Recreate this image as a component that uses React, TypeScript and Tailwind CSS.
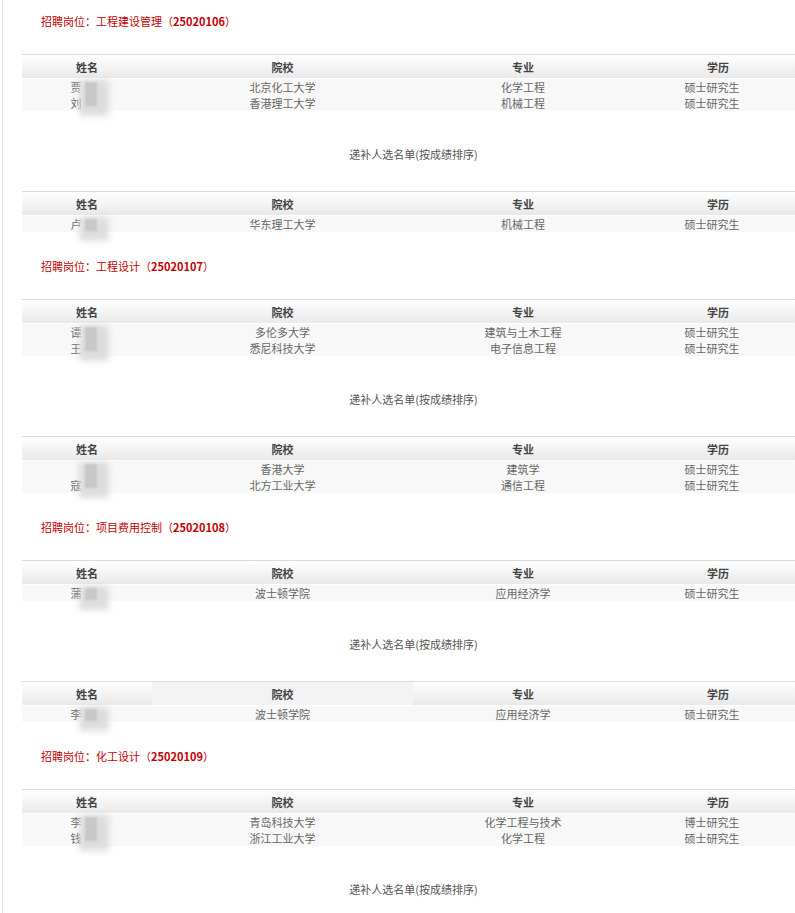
import { FC } from 'react';

type Row = { name: string; school: string; major: string; degree: string };

type Section = {
  post: string;
  code: string;
  main: Row[];
  backup: Row[];
  highlight?: boolean;
};

const sections: Section[] = [
  {
    post: '工程建设管理',
    code: '25020106',
    main: [
      { name: '贾', school: '北京化工大学', major: '化学工程', degree: '硕士研究生' },
      { name: '刘', school: '香港理工大学', major: '机械工程', degree: '硕士研究生' },
    ],
    backup: [{ name: '卢', school: '华东理工大学', major: '机械工程', degree: '硕士研究生' }],
  },
  {
    post: '工程设计',
    code: '25020107',
    main: [
      { name: '谭', school: '多伦多大学', major: '建筑与土木工程', degree: '硕士研究生' },
      { name: '王', school: '悉尼科技大学', major: '电子信息工程', degree: '硕士研究生' },
    ],
    backup: [
      { name: '', school: '香港大学', major: '建筑学', degree: '硕士研究生' },
      { name: '寇', school: '北方工业大学', major: '通信工程', degree: '硕士研究生' },
    ],
  },
  {
    post: '项目费用控制',
    code: '25020108',
    main: [{ name: '蒲', school: '波士顿学院', major: '应用经济学', degree: '硕士研究生' }],
    backup: [{ name: '李', school: '波士顿学院', major: '应用经济学', degree: '硕士研究生' }],
    highlight: true,
  },
  {
    post: '化工设计',
    code: '25020109',
    main: [
      { name: '李', school: '青岛科技大学', major: '化学工程与技术', degree: '博士研究生' },
      { name: '钱', school: '浙江工业大学', major: '化学工程', degree: '硕士研究生' },
    ],
    backup: [],
  },
];

const cols = ['w-[130px]', 'w-[261px]', 'w-[220px]', 'w-[170px]'];

const Table: FC<{ rows: Row[]; highlight?: boolean }> = ({ rows, highlight }) => {
  const heads = ['姓名', '院校', '专业', '学历'];
  return (
    <div className="ml-[19px] w-[791px] shrink-0">
      <div className="flex border-t border-[#dadada]">
        {heads.map((h, i) => (
          <div
            key={h}
            className={`${cols[i]} h-[24px] border-b border-white pt-[1px] text-center leading-[23px] font-bold text-[#444] ${
              highlight && i === 1 ? 'bg-[#f3f3f3]' : 'bg-gradient-to-b from-white to-[#e9e9e9]'
            }`}
          >
            {h}
          </div>
        ))}
        <div className="h-[24px] flex-1 border-b border-white bg-gradient-to-b from-white to-[#e9e9e9]" />
      </div>
      <div className="relative bg-[#f8f8f8] text-[#666]">
        {rows.map((r, idx) => (
          <div key={idx} className="flex h-[16px] leading-[16px]">
            <div className={`${cols[0]} text-center`}>
              <span className={r.name ? '' : 'opacity-0'}>{r.name || '某'}</span>
              <span className="inline-block w-[22px]" />
            </div>
            <div className={`${cols[1]} text-center`}>{r.school}</div>
            <div className={`${cols[2]} text-center`}>{r.major}</div>
            <div className={`${cols[3]} pr-[12px] text-center`}>{r.degree}</div>
          </div>
        ))}
        {/* 打码 */}
        <div
          className={`absolute left-[57px] top-[1px] w-[30px] ${
            rows.length > 1 ? 'h-[36px]' : 'h-[24px]'
          } bg-[#dadada] blur-[3px] opacity-90`}
        />
        <div
          className={`absolute left-[63px] top-[3px] w-[12px] ${
            rows.length > 1 ? 'h-[24px]' : 'h-[12px]'
          } bg-[#c8c8c8] blur-[1px]`}
        />
      </div>
    </div>
  );
};

export default function App() {
  return (
    <div
      className="h-[913px] overflow-hidden bg-white pl-[2px] text-[11px]"
      style={{ fontFamily: '"Noto Sans CJK SC", "Liberation Sans", sans-serif' }}
    >
      <div className="flex min-h-full flex-col border-l border-[#e4e4e4]">
        {sections.map((s, i) => (
          <div key={s.code} className="flex flex-col">
            <div
              className={`${
                i === 0 ? 'mt-[11px]' : 'mt-[24px]'
              } mb-[23px] ml-[38px] h-[20px] leading-[20px] text-[#c40000]`}
            >
              招聘岗位：{s.post}（<span className="font-bold">{s.code}</span>）
            </div>
            <Table rows={s.main} />
            <div className="mt-[33px] mb-[27px] ml-[19px] h-[20px] w-[791px] pr-[8px] text-center leading-[20px] text-[#555]">
              递补人选名单(按成绩排序)
            </div>
            {s.backup.length > 0 && <Table rows={s.backup} highlight={s.highlight} />}
          </div>
        ))}
      </div>
    </div>
  );
}
